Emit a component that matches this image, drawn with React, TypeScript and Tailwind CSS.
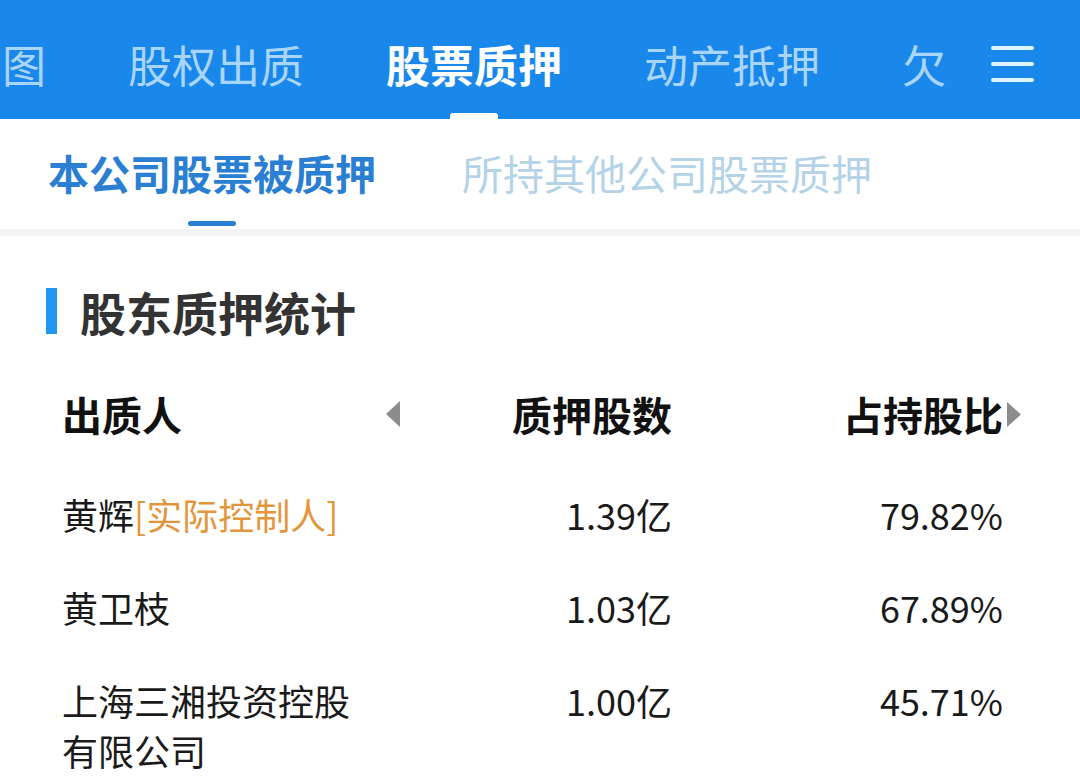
import React from "react";

const cjk = { fontFamily: '"Noto Sans CJK SC", "Noto Sans", sans-serif' };

const topTabs = ["图", "股权出质", "股票质押", "动产抵押", "欠"];

const rows = [
  { name: "黄辉", tag: "[实际控制人]", shares: "1.39亿", ratio: "79.82%" },
  { name: "黄卫枝", shares: "1.03亿", ratio: "67.89%" },
  { name: "上海三湘投资控股有限公司", shares: "1.00亿", ratio: "45.71%" },
];

function TriLeft() {
  return (
    <svg width="14" height="26" viewBox="0 0 14 26">
      <polygon points="14,0 14,26 0,13" fill="#8c8c8c" />
    </svg>
  );
}

function TriRight() {
  return (
    <svg width="14" height="25" viewBox="0 0 14 25">
      <polygon points="0,0 0,25 14,12.5" fill="#8c8c8c" />
    </svg>
  );
}

export default function App() {
  return (
    <div className="w-[1080px] h-[776px] overflow-hidden bg-white" style={cjk}>
      {/* top tabs */}
      <div className="relative h-[119px] bg-[#1a87eb] flex overflow-hidden">
        <div className="flex pl-[2px] gap-[82px] whitespace-nowrap">
          {topTabs.map((t) => {
            const active = t === "股票质押";
            return (
              <div key={t} className="flex flex-col items-center">
                <div
                  className={
                    "pt-[34px] text-[44px] leading-[60px] " +
                    (active ? "text-white font-bold" : "text-[#a9d5f8]")
                  }
                >
                  {t}
                </div>
                {active && <div className="mt-auto w-[48px] h-[6px] rounded-t-[3px] bg-white" />}
              </div>
            );
          })}
        </div>
        {/* menu button */}
        <div className="absolute right-0 top-0 h-full w-[110px] bg-[#1a87eb] flex flex-col items-start pl-[21px] pt-[46px] gap-[12px]">
          <div className="w-[43px] h-[4px] rounded-full bg-[#dcf5ff]" />
          <div className="w-[43px] h-[4px] rounded-full bg-[#dcf5ff]" />
          <div className="w-[43px] h-[4px] rounded-full bg-[#dcf5ff]" />
        </div>
      </div>

      {/* sub tabs */}
      <div className="h-[110px] flex pl-[48px] gap-[86px] whitespace-nowrap">
        <div className="flex flex-col items-center pt-[24px]">
          <div className="text-[41px] leading-[58px] font-bold text-[#2a7fd2]">本公司股票被质押</div>
          <div className="mt-[20px] w-[48px] h-[5px] rounded-full bg-[#2a7fd2]" />
        </div>
        <div className="pt-[24px] text-[41px] leading-[58px] text-[#b4d3e7]">所持其他公司股票质押</div>
      </div>
      <div className="h-[7px] bg-[#f3f4f5]" />

      {/* section title */}
      <div className="flex items-center pt-[52px] pl-[46px] gap-[23px]">
        <div className="w-[11px] h-[46px] bg-[#2196f0]" />
        <div className="text-[46px] leading-[46px] font-bold text-[#333333]">股东质押统计</div>
      </div>

      {/* table header */}
      <div className="grid grid-cols-[338px_272px_331px_18px] pl-[62px] pt-[55px] items-center text-[40px] leading-[50px] font-bold text-[#111111]">
        <div className="flex items-center justify-between">
          <span>出质人</span>
          <TriLeft />
        </div>
        <div className="text-right">质押股数</div>
        <div className="text-right">占持股比</div>
        <div className="flex justify-end">
          <TriRight />
        </div>
      </div>

      {/* rows */}
      <div className="pt-[28px]">
        {rows.map((r) => (
          <div
            key={r.name}
            className="grid grid-cols-[338px_272px_331px] pl-[62px] pt-[22px] pb-[21px] items-start text-[36px] leading-[50px] text-[#1a1a1a]"
          >
            <div className="max-w-[300px]">
              {r.name}
              {r.tag && <span className="text-[#e2963c]">{r.tag}</span>}
            </div>
            <div className="text-right">{r.shares}</div>
            <div className="text-right">{r.ratio}</div>
          </div>
        ))}
      </div>
    </div>
  );
}
